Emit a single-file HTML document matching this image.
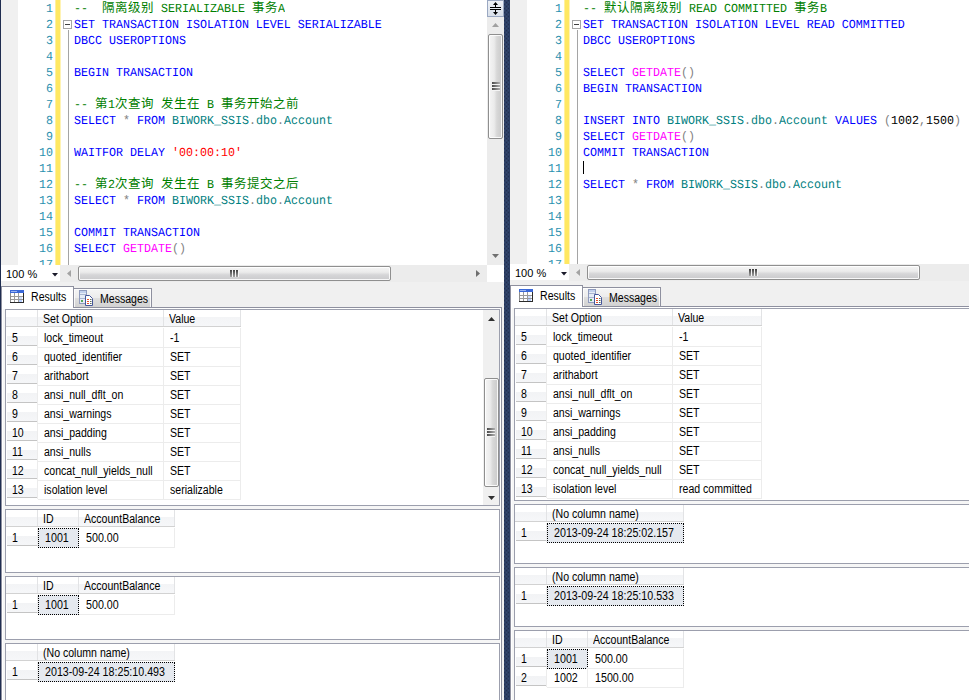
<!DOCTYPE html><html><head><meta charset="utf-8"><title>SSMS</title><style>
*{box-sizing:border-box;margin:0;padding:0}
html,body{width:969px;height:700px;overflow:hidden;background:#f0f0f0}
body{position:relative;font-family:"Liberation Sans","Noto Sans CJK SC",sans-serif;font-size:12px;color:#000}
div{position:absolute}
.dv{top:0;width:6px;height:700px;background:#2c3e63;overflow:hidden}
.ed{top:0;background:#fff;overflow:hidden}
.mg{left:0;top:0;width:17px;height:265px;background:#f0f0f0}
.yb{left:54px;top:0;width:6px;height:265px;background:linear-gradient(90deg,#fff0a0 0,#fff0a0 1px,#ffe862 1px,#ffe862 5px,#fff3b4 5px)}
.ol{left:67px;top:30px;width:1px;height:235px;background:#a5a5a5}
.ob{left:62px;top:20px;width:9px;height:9px;border:1px solid #a5a5a5;background:#fff}
.ob i{position:absolute;left:1px;top:3px;width:5px;height:1px;background:#404040}
.ln{left:17px;width:35px;height:16px;line-height:16px;text-align:right;font-family:"Liberation Mono",monospace;font-size:11.667px;color:#2b91af;white-space:pre;text-rendering:geometricPrecision;transform:scaleY(1.06);transform-origin:0 0}
.cl{height:16px;line-height:16px;font-family:"Liberation Mono",monospace;font-size:11.667px;white-space:pre;text-rendering:geometricPrecision;transform:scaleY(1.06);transform-origin:0 0}
.cz{height:16px;line-height:16px;font-family:"Liberation Sans","Noto Sans CJK SC",sans-serif;font-size:12.5px;letter-spacing:0.5px;white-space:pre}
.k{color:#0000ff}.c{color:#008000}.o{color:#008080}.s{color:#ff0000}.f{color:#ff00ff}.g{color:#808080}.n{color:#000}
.caret{left:73px;width:1px;height:13px;background:#000}
.t{height:16px;line-height:16px;font-size:12px;white-space:pre;transform:scaleX(0.88);transform-origin:0 0}
.zb{height:16px;background:#fff;width:59px}
.hs{height:17px;background:#ececec}
.th{border:1px solid #8f8f8f;border-radius:2px;box-shadow:inset 0 0 0 1px rgba(255,255,255,0.85)}
.thh{background:linear-gradient(#f5f5f5 0,#ebebeb 40%,#d6d6d8 60%,#cacacc 100%)}
.thv{background:linear-gradient(90deg,#f5f5f5 0,#ebebeb 40%,#d8d8d8 60%,#cacaca 100%)}
.tp{border:1px solid #8e909f;background:#f6f6f6;box-shadow:inset 0 0 0 1px #fff}
.tab{border:1px solid #8e909f;border-bottom:none;box-shadow:inset 1px 1px 0 rgba(255,255,255,0.8),inset -1px 0 0 rgba(255,255,255,0.8)}
.gp{background:#fff;border:1px solid #9c9fad;overflow:hidden}
.hr{left:0;top:0;height:17px;background:linear-gradient(#fff 0,#fff 7px,#f3f4f6 7px,#f6f7f9 16px,#d2d2d2 16px)}
.vs{top:0;width:1px;height:16px;background:#e2e3e5}
.rh{left:0;width:32px;height:19px;background:linear-gradient(#fff 0,#fff 8px,#f2f3f5 8px,#f5f6f8 17px,#c4c4c4 17px,#c4c4c4 18px,#fff 18px);border-left:1px solid #fff;border-right:1px solid #ececec}
.dc{height:20px;border-right:1px solid #ececec;border-bottom:1px solid #ececec}
.sel{height:20px;background:#e5e9ef;border:1px dotted #000}
svg{position:absolute}
</style></head><body>
<div class="ed" style="left:1px;width:486px;height:265px">
<div class="mg"></div><div class="yb"></div><div class="ol"></div><div class="ob"><i></i></div>
<div class="ln" style="top:0px">1</div>
<div class="cl c" style="left:73px;top:0px">--</div><div class="cz c" style="left:101px;top:0px">隔离级别</div><div class="cl c" style="left:160px;top:0px">SERIALIZABLE</div><div class="cz c" style="left:251px;top:0px">事务</div><div class="cl c" style="left:277px;top:0px">A</div>
<div class="ln" style="top:16px">2</div>
<div class="cl k" style="left:73px;top:16px">SET TRANSACTION ISOLATION LEVEL SERIALIZABLE</div>
<div class="ln" style="top:32px">3</div>
<div class="cl k" style="left:73px;top:32px">DBCC USEROPTIONS</div>
<div class="ln" style="top:48px">4</div>
<div class="ln" style="top:64px">5</div>
<div class="cl k" style="left:73px;top:64px">BEGIN TRANSACTION</div>
<div class="ln" style="top:80px">6</div>
<div class="ln" style="top:96px">7</div>
<div class="cl c" style="left:73px;top:96px">--</div><div class="cz c" style="left:94px;top:96px">第</div><div class="cl c" style="left:107px;top:96px">1</div><div class="cz c" style="left:114px;top:96px">次查询</div><div class="cz c" style="left:160px;top:96px">发生在</div><div class="cl c" style="left:206px;top:96px">B</div><div class="cz c" style="left:220px;top:96px">事务开始之前</div>
<div class="ln" style="top:112px">8</div>
<div class="cl k" style="left:73px;top:112px">SELECT</div><div class="cl g" style="left:122px;top:112px">*</div><div class="cl k" style="left:136px;top:112px">FROM</div><div class="cl o" style="left:171px;top:112px">BIWORK_SSIS</div><div class="cl g" style="left:248px;top:112px">.</div><div class="cl o" style="left:255px;top:112px">dbo</div><div class="cl g" style="left:276px;top:112px">.</div><div class="cl o" style="left:283px;top:112px">Account</div>
<div class="ln" style="top:128px">9</div>
<div class="ln" style="top:144px">10</div>
<div class="cl k" style="left:73px;top:144px">WAITFOR DELAY</div><div class="cl s" style="left:171px;top:144px">'00:00:10'</div>
<div class="ln" style="top:160px">11</div>
<div class="ln" style="top:176px">12</div>
<div class="cl c" style="left:73px;top:176px">--</div><div class="cz c" style="left:94px;top:176px">第</div><div class="cl c" style="left:107px;top:176px">2</div><div class="cz c" style="left:114px;top:176px">次查询</div><div class="cz c" style="left:160px;top:176px">发生在</div><div class="cl c" style="left:206px;top:176px">B</div><div class="cz c" style="left:220px;top:176px">事务提交之后</div>
<div class="ln" style="top:192px">13</div>
<div class="cl k" style="left:73px;top:192px">SELECT</div><div class="cl g" style="left:122px;top:192px">*</div><div class="cl k" style="left:136px;top:192px">FROM</div><div class="cl o" style="left:171px;top:192px">BIWORK_SSIS</div><div class="cl g" style="left:248px;top:192px">.</div><div class="cl o" style="left:255px;top:192px">dbo</div><div class="cl g" style="left:276px;top:192px">.</div><div class="cl o" style="left:283px;top:192px">Account</div>
<div class="ln" style="top:208px">14</div>
<div class="ln" style="top:224px">15</div>
<div class="cl k" style="left:73px;top:224px">COMMIT TRANSACTION</div>
<div class="ln" style="top:240px">16</div>
<div class="cl k" style="left:73px;top:240px">SELECT</div><div class="cl f" style="left:122px;top:240px">GETDATE</div><div class="cl g" style="left:171px;top:240px">()</div>
<div class="ln" style="top:256px">17</div>
</div>
<div class="zb" style="left:1px;top:265px"><div class="t" style="left:5px;top:1px;font-size:11px;transform:none">100 %</div><svg style="left:51px;top:8px" width="6" height="3.5"><path d="M0 0 L6 0 L3 3.5 Z" fill="#1a1a2a"/></svg></div>
<div class="hs" style="left:60px;top:265px;width:427px"><svg style="left:7px;top:5px" width="4" height="7"><path d="M4 0 L4 7 L0 3.5 Z" fill="#a3a3a3"/></svg><div class="th thh" style="left:18px;top:1px;width:313px;height:15px"></div><div style="left:170px;top:5px;width:3px;height:7px;border-right:1px solid #f4f4f4;background:linear-gradient(#3c3c3c,#a4a4a4)"></div><div style="left:173px;top:5px;width:3px;height:7px;border-right:1px solid #f4f4f4;background:linear-gradient(#3c3c3c,#a4a4a4)"></div><div style="left:176px;top:5px;width:3px;height:7px;border-right:1px solid #f4f4f4;background:linear-gradient(#3c3c3c,#a4a4a4)"></div><svg style="left:416px;top:5px" width="4" height="7"><path d="M0 0 L4 3.5 L0 7 Z" fill="#6e6e6e"/></svg></div>
<div class="ed" style="left:510px;width:460px;height:264px">
<div class="mg"></div><div class="yb"></div><div class="ol"></div><div class="ob"><i></i></div>
<div class="ln" style="top:0px">1</div>
<div class="cl c" style="left:73px;top:0px">--</div><div class="cz c" style="left:94px;top:0px">默认隔离级别</div><div class="cl c" style="left:179px;top:0px">READ COMMITTED</div><div class="cz c" style="left:284px;top:0px">事务</div><div class="cl c" style="left:310px;top:0px">B</div>
<div class="ln" style="top:16px">2</div>
<div class="cl k" style="left:73px;top:16px">SET TRANSACTION ISOLATION LEVEL READ COMMITTED</div>
<div class="ln" style="top:32px">3</div>
<div class="cl k" style="left:73px;top:32px">DBCC USEROPTIONS</div>
<div class="ln" style="top:48px">4</div>
<div class="ln" style="top:64px">5</div>
<div class="cl k" style="left:73px;top:64px">SELECT</div><div class="cl f" style="left:122px;top:64px">GETDATE</div><div class="cl g" style="left:171px;top:64px">()</div>
<div class="ln" style="top:80px">6</div>
<div class="cl k" style="left:73px;top:80px">BEGIN TRANSACTION</div>
<div class="ln" style="top:96px">7</div>
<div class="ln" style="top:112px">8</div>
<div class="cl k" style="left:73px;top:112px">INSERT INTO</div><div class="cl o" style="left:157px;top:112px">BIWORK_SSIS</div><div class="cl g" style="left:234px;top:112px">.</div><div class="cl o" style="left:241px;top:112px">dbo</div><div class="cl g" style="left:262px;top:112px">.</div><div class="cl o" style="left:269px;top:112px">Account</div><div class="cl k" style="left:325px;top:112px">VALUES</div><div class="cl g" style="left:374px;top:112px">(</div><div class="cl n" style="left:381px;top:112px">1002</div><div class="cl g" style="left:409px;top:112px">,</div><div class="cl n" style="left:416px;top:112px">1500</div><div class="cl g" style="left:444px;top:112px">)</div>
<div class="ln" style="top:128px">9</div>
<div class="cl k" style="left:73px;top:128px">SELECT</div><div class="cl f" style="left:122px;top:128px">GETDATE</div><div class="cl g" style="left:171px;top:128px">()</div>
<div class="ln" style="top:144px">10</div>
<div class="cl k" style="left:73px;top:144px">COMMIT TRANSACTION</div>
<div class="ln" style="top:160px">11</div>
<div class="ln" style="top:176px">12</div>
<div class="cl k" style="left:73px;top:176px">SELECT</div><div class="cl g" style="left:122px;top:176px">*</div><div class="cl k" style="left:136px;top:176px">FROM</div><div class="cl o" style="left:171px;top:176px">BIWORK_SSIS</div><div class="cl g" style="left:248px;top:176px">.</div><div class="cl o" style="left:255px;top:176px">dbo</div><div class="cl g" style="left:276px;top:176px">.</div><div class="cl o" style="left:283px;top:176px">Account</div>
<div class="ln" style="top:192px">13</div>
<div class="ln" style="top:208px">14</div>
<div class="ln" style="top:224px">15</div>
<div class="ln" style="top:240px">16</div>
<div class="ln" style="top:256px">17</div>
<div class="caret" style="top:161px"></div>
</div>
<div class="zb" style="left:510px;top:264px"><div class="t" style="left:5px;top:1px;font-size:11px;transform:none">100 %</div><svg style="left:51px;top:8px" width="6" height="3.5"><path d="M0 0 L6 0 L3 3.5 Z" fill="#1a1a2a"/></svg></div>
<div class="hs" style="left:569px;top:264px;width:400px"><svg style="left:7px;top:5px" width="4" height="7"><path d="M4 0 L4 7 L0 3.5 Z" fill="#a3a3a3"/></svg><div class="th thh" style="left:18px;top:1px;width:333px;height:15px"></div><div style="left:180px;top:5px;width:3px;height:7px;border-right:1px solid #f4f4f4;background:linear-gradient(#3c3c3c,#a4a4a4)"></div><div style="left:183px;top:5px;width:3px;height:7px;border-right:1px solid #f4f4f4;background:linear-gradient(#3c3c3c,#a4a4a4)"></div><div style="left:186px;top:5px;width:3px;height:7px;border-right:1px solid #f4f4f4;background:linear-gradient(#3c3c3c,#a4a4a4)"></div></div>
<div style="left:487px;top:0;width:17px;height:265px;background:#ececec"><div style="left:0;top:0;width:17px;height:17px;border:1px solid #9aa8c2;background:linear-gradient(#eef1f6,#d9e0ea)"></div><svg style="left:3px;top:2px" width="11" height="13" viewBox="0 0 11 13"><path d="M5.5 0L8 3H6V5H11V6H0V5H5V3H3zM0 7H11V8H6V10H8L5.5 13L3 10H5V8H0z" fill="#000"/></svg><svg style="left:5px;top:23px" width="7" height="4"><path d="M0 4 L3.5 0 L7 4 Z" fill="#a0a0a0"/></svg><div class="th thv" style="left:1px;top:34px;width:15px;height:105px"></div><div style="left:5px;top:82px;width:8px;height:3px;border-bottom:1px solid #f4f4f4;background:linear-gradient(90deg,#4a4a4a,#b0b0b0)"></div><div style="left:5px;top:85px;width:8px;height:3px;border-bottom:1px solid #f4f4f4;background:linear-gradient(90deg,#4a4a4a,#b0b0b0)"></div><div style="left:5px;top:88px;width:8px;height:3px;border-bottom:1px solid #f4f4f4;background:linear-gradient(90deg,#4a4a4a,#b0b0b0)"></div><svg style="left:5px;top:254px" width="7" height="4"><path d="M0 0 L7 0 L3.5 4 Z" fill="#707070"/></svg></div>
<div style="left:487px;top:265px;width:17px;height:17px;background:#fff"></div>
<div class="tp" style="left:1px;top:307px;width:501px;height:400px"></div><div class="tab" style="left:73px;top:288px;width:79px;height:19px;background:linear-gradient(#f5f5f5 0,#ececec 9px,#dfdfdf 9px,#d2d2d2 100%)"><div class="t" style="left:26px;top:2px">Messages</div><svg style="left:5px;top:1px" width="14" height="16" viewBox="0 0 14 16"><rect x="0.5" y="0.5" width="7" height="13" fill="#e6ecf6" stroke="#8f9bbd"/><rect x="1" y="1" width="6" height="2" fill="#c2d0ec"/><path d="M1 4.5h6M1 8.5h6" stroke="#a8b4d0"/><rect x="2" y="10" width="2" height="2" fill="#58a858"/><path d="M6.5 5.5h4l3 3v7h-7z" fill="#fff" stroke="#46569a"/><path d="M8 9.5h2M8 11.5h2M8 13.5h2" stroke="#e8502c"/><path d="M11 9.5h1.5M11 11.5h1.5M11 13.5h1.5" stroke="#5a6a5a"/></svg></div><div class="tab" style="left:1px;top:286px;width:73px;height:22px;background:#fff"><div class="t" style="left:29.3px;top:2px">Results</div><svg style="left:8px;top:3px" width="14" height="13" viewBox="0 0 14 13"><rect x="0" y="0" width="14" height="13" fill="#8d8d8d"/><rect x="1" y="3" width="12" height="9" fill="#fff"/><rect x="0" y="0" width="14" height="3" fill="#3a68d8"/><rect x="1" y="1" width="6" height="1" fill="#9ab4f0"/><path d="M1 6.5h12M1 9.5h12M4.5 3v9M8.5 3v9" stroke="#9a9a9a" fill="none"/><rect x="9" y="7" width="3" height="2" fill="#cfe0ff"/><rect x="9" y="10" width="3" height="2" fill="#b8d0ff"/><path d="M13.5 3v10M0 12.5h14" stroke="#2a2a2a" fill="none"/></svg></div>
<div class="tp" style="left:510px;top:306px;width:480px;height:400px"></div><div class="tab" style="left:582px;top:287px;width:79px;height:19px;background:linear-gradient(#f5f5f5 0,#ececec 9px,#dfdfdf 9px,#d2d2d2 100%)"><div class="t" style="left:26px;top:2px">Messages</div><svg style="left:5px;top:1px" width="14" height="16" viewBox="0 0 14 16"><rect x="0.5" y="0.5" width="7" height="13" fill="#e6ecf6" stroke="#8f9bbd"/><rect x="1" y="1" width="6" height="2" fill="#c2d0ec"/><path d="M1 4.5h6M1 8.5h6" stroke="#a8b4d0"/><rect x="2" y="10" width="2" height="2" fill="#58a858"/><path d="M6.5 5.5h4l3 3v7h-7z" fill="#fff" stroke="#46569a"/><path d="M8 9.5h2M8 11.5h2M8 13.5h2" stroke="#e8502c"/><path d="M11 9.5h1.5M11 11.5h1.5M11 13.5h1.5" stroke="#5a6a5a"/></svg></div><div class="tab" style="left:510px;top:285px;width:73px;height:22px;background:#fff"><div class="t" style="left:29.3px;top:2px">Results</div><svg style="left:8px;top:3px" width="14" height="13" viewBox="0 0 14 13"><rect x="0" y="0" width="14" height="13" fill="#8d8d8d"/><rect x="1" y="3" width="12" height="9" fill="#fff"/><rect x="0" y="0" width="14" height="3" fill="#3a68d8"/><rect x="1" y="1" width="6" height="1" fill="#9ab4f0"/><path d="M1 6.5h12M1 9.5h12M4.5 3v9M8.5 3v9" stroke="#9a9a9a" fill="none"/><rect x="9" y="7" width="3" height="2" fill="#cfe0ff"/><rect x="9" y="10" width="3" height="2" fill="#b8d0ff"/><path d="M13.5 3v10M0 12.5h14" stroke="#2a2a2a" fill="none"/></svg></div>
<div class="gp" style="left:5px;top:309px;width:495px;height:197px">
<div class="hr" style="width:235px"></div>
<div class="vs" style="left:31px"></div>
<div class="t" style="left:36.7px;top:1px">Set Option</div>
<div class="vs" style="left:157px"></div>
<div class="t" style="left:162.7px;top:1px">Value</div>
<div class="vs" style="left:234px"></div>
<div class="rh" style="top:18px"></div>
<div class="t" style="left:6.2px;top:20px">5</div>
<div class="dc" style="left:32px;top:18px;width:126px"></div>
<div class="t" style="left:38.2px;top:20px">lock_timeout</div>
<div class="dc" style="left:158px;top:18px;width:77px"></div>
<div class="t" style="left:164.2px;top:20px">-1</div>
<div class="rh" style="top:37px"></div>
<div class="t" style="left:6.2px;top:39px">6</div>
<div class="dc" style="left:32px;top:37px;width:126px"></div>
<div class="t" style="left:38.2px;top:39px">quoted_identifier</div>
<div class="dc" style="left:158px;top:37px;width:77px"></div>
<div class="t" style="left:164.2px;top:39px">SET</div>
<div class="rh" style="top:56px"></div>
<div class="t" style="left:6.2px;top:58px">7</div>
<div class="dc" style="left:32px;top:56px;width:126px"></div>
<div class="t" style="left:38.2px;top:58px">arithabort</div>
<div class="dc" style="left:158px;top:56px;width:77px"></div>
<div class="t" style="left:164.2px;top:58px">SET</div>
<div class="rh" style="top:75px"></div>
<div class="t" style="left:6.2px;top:77px">8</div>
<div class="dc" style="left:32px;top:75px;width:126px"></div>
<div class="t" style="left:38.2px;top:77px">ansi_null_dflt_on</div>
<div class="dc" style="left:158px;top:75px;width:77px"></div>
<div class="t" style="left:164.2px;top:77px">SET</div>
<div class="rh" style="top:94px"></div>
<div class="t" style="left:6.2px;top:96px">9</div>
<div class="dc" style="left:32px;top:94px;width:126px"></div>
<div class="t" style="left:38.2px;top:96px">ansi_warnings</div>
<div class="dc" style="left:158px;top:94px;width:77px"></div>
<div class="t" style="left:164.2px;top:96px">SET</div>
<div class="rh" style="top:113px"></div>
<div class="t" style="left:6.2px;top:115px">10</div>
<div class="dc" style="left:32px;top:113px;width:126px"></div>
<div class="t" style="left:38.2px;top:115px">ansi_padding</div>
<div class="dc" style="left:158px;top:113px;width:77px"></div>
<div class="t" style="left:164.2px;top:115px">SET</div>
<div class="rh" style="top:132px"></div>
<div class="t" style="left:6.2px;top:134px">11</div>
<div class="dc" style="left:32px;top:132px;width:126px"></div>
<div class="t" style="left:38.2px;top:134px">ansi_nulls</div>
<div class="dc" style="left:158px;top:132px;width:77px"></div>
<div class="t" style="left:164.2px;top:134px">SET</div>
<div class="rh" style="top:151px"></div>
<div class="t" style="left:6.2px;top:153px">12</div>
<div class="dc" style="left:32px;top:151px;width:126px"></div>
<div class="t" style="left:38.2px;top:153px">concat_null_yields_null</div>
<div class="dc" style="left:158px;top:151px;width:77px"></div>
<div class="t" style="left:164.2px;top:153px">SET</div>
<div class="rh" style="top:170px"></div>
<div class="t" style="left:6.2px;top:172px">13</div>
<div class="dc" style="left:32px;top:170px;width:126px"></div>
<div class="t" style="left:38.2px;top:172px">isolation level</div>
<div class="dc" style="left:158px;top:170px;width:77px"></div>
<div class="t" style="left:164.2px;top:172px">serializable</div>
<div style="left:477px;top:0;width:16px;height:195px;background:#f0f0f0"><svg style="left:5px;top:7px" width="7" height="4"><path d="M0 4 L3.5 0 L7 4 Z" fill="#303030"/></svg><div class="th thv" style="left:1px;top:68px;width:15px;height:109px"></div><div style="left:4px;top:118px;width:8px;height:3px;border-bottom:1px solid #f4f4f4;background:linear-gradient(90deg,#4a4a4a,#b0b0b0)"></div><div style="left:4px;top:121px;width:8px;height:3px;border-bottom:1px solid #f4f4f4;background:linear-gradient(90deg,#4a4a4a,#b0b0b0)"></div><div style="left:4px;top:124px;width:8px;height:3px;border-bottom:1px solid #f4f4f4;background:linear-gradient(90deg,#4a4a4a,#b0b0b0)"></div><svg style="left:5px;top:186px" width="7" height="4"><path d="M0 0 L7 0 L3.5 4 Z" fill="#303030"/></svg></div>
</div>
<div class="gp" style="left:5px;top:509px;width:495px;height:64px">
<div class="hr" style="width:169px"></div>
<div class="vs" style="left:31px"></div>
<div class="t" style="left:36.7px;top:1px">ID</div>
<div class="vs" style="left:72px"></div>
<div class="t" style="left:77.7px;top:1px">AccountBalance</div>
<div class="vs" style="left:168px"></div>
<div class="rh" style="top:18px"></div>
<div class="t" style="left:6.2px;top:20px">1</div>
<div class="sel" style="left:32px;top:18px;width:41px"></div>
<div class="t" style="left:39.3px;top:20px;transform:scaleX(0.89)">1001</div>
<div class="dc" style="left:73px;top:18px;width:96px"></div>
<div class="t" style="left:80.3px;top:20px;transform:scaleX(0.89)">500.00</div>

</div>
<div class="gp" style="left:5px;top:576px;width:495px;height:64px">
<div class="hr" style="width:169px"></div>
<div class="vs" style="left:31px"></div>
<div class="t" style="left:36.7px;top:1px">ID</div>
<div class="vs" style="left:72px"></div>
<div class="t" style="left:77.7px;top:1px">AccountBalance</div>
<div class="vs" style="left:168px"></div>
<div class="rh" style="top:18px"></div>
<div class="t" style="left:6.2px;top:20px">1</div>
<div class="sel" style="left:32px;top:18px;width:41px"></div>
<div class="t" style="left:39.3px;top:20px;transform:scaleX(0.89)">1001</div>
<div class="dc" style="left:73px;top:18px;width:96px"></div>
<div class="t" style="left:80.3px;top:20px;transform:scaleX(0.89)">500.00</div>

</div>
<div class="gp" style="left:5px;top:643px;width:495px;height:64px">
<div class="hr" style="width:169px"></div>
<div class="vs" style="left:31px"></div>
<div class="t" style="left:36.7px;top:1px">(No column name)</div>
<div class="vs" style="left:168px"></div>
<div class="rh" style="top:18px"></div>
<div class="t" style="left:6.2px;top:20px">1</div>
<div class="sel" style="left:32px;top:18px;width:137px"></div>
<div class="t" style="left:39.3px;top:20px;transform:scaleX(0.89)">2013-09-24 18:25:10.493</div>

</div>
<div class="gp" style="left:514px;top:308px;width:470px;height:193px">
<div class="hr" style="width:247px"></div>
<div class="vs" style="left:31px"></div>
<div class="t" style="left:36.7px;top:1px">Set Option</div>
<div class="vs" style="left:157px"></div>
<div class="t" style="left:162.7px;top:1px">Value</div>
<div class="vs" style="left:246px"></div>
<div class="rh" style="top:18px"></div>
<div class="t" style="left:6.2px;top:20px">5</div>
<div class="dc" style="left:32px;top:18px;width:126px"></div>
<div class="t" style="left:38.2px;top:20px">lock_timeout</div>
<div class="dc" style="left:158px;top:18px;width:89px"></div>
<div class="t" style="left:164.2px;top:20px">-1</div>
<div class="rh" style="top:37px"></div>
<div class="t" style="left:6.2px;top:39px">6</div>
<div class="dc" style="left:32px;top:37px;width:126px"></div>
<div class="t" style="left:38.2px;top:39px">quoted_identifier</div>
<div class="dc" style="left:158px;top:37px;width:89px"></div>
<div class="t" style="left:164.2px;top:39px">SET</div>
<div class="rh" style="top:56px"></div>
<div class="t" style="left:6.2px;top:58px">7</div>
<div class="dc" style="left:32px;top:56px;width:126px"></div>
<div class="t" style="left:38.2px;top:58px">arithabort</div>
<div class="dc" style="left:158px;top:56px;width:89px"></div>
<div class="t" style="left:164.2px;top:58px">SET</div>
<div class="rh" style="top:75px"></div>
<div class="t" style="left:6.2px;top:77px">8</div>
<div class="dc" style="left:32px;top:75px;width:126px"></div>
<div class="t" style="left:38.2px;top:77px">ansi_null_dflt_on</div>
<div class="dc" style="left:158px;top:75px;width:89px"></div>
<div class="t" style="left:164.2px;top:77px">SET</div>
<div class="rh" style="top:94px"></div>
<div class="t" style="left:6.2px;top:96px">9</div>
<div class="dc" style="left:32px;top:94px;width:126px"></div>
<div class="t" style="left:38.2px;top:96px">ansi_warnings</div>
<div class="dc" style="left:158px;top:94px;width:89px"></div>
<div class="t" style="left:164.2px;top:96px">SET</div>
<div class="rh" style="top:113px"></div>
<div class="t" style="left:6.2px;top:115px">10</div>
<div class="dc" style="left:32px;top:113px;width:126px"></div>
<div class="t" style="left:38.2px;top:115px">ansi_padding</div>
<div class="dc" style="left:158px;top:113px;width:89px"></div>
<div class="t" style="left:164.2px;top:115px">SET</div>
<div class="rh" style="top:132px"></div>
<div class="t" style="left:6.2px;top:134px">11</div>
<div class="dc" style="left:32px;top:132px;width:126px"></div>
<div class="t" style="left:38.2px;top:134px">ansi_nulls</div>
<div class="dc" style="left:158px;top:132px;width:89px"></div>
<div class="t" style="left:164.2px;top:134px">SET</div>
<div class="rh" style="top:151px"></div>
<div class="t" style="left:6.2px;top:153px">12</div>
<div class="dc" style="left:32px;top:151px;width:126px"></div>
<div class="t" style="left:38.2px;top:153px">concat_null_yields_null</div>
<div class="dc" style="left:158px;top:151px;width:89px"></div>
<div class="t" style="left:164.2px;top:153px">SET</div>
<div class="rh" style="top:170px"></div>
<div class="t" style="left:6.2px;top:172px">13</div>
<div class="dc" style="left:32px;top:170px;width:126px"></div>
<div class="t" style="left:38.2px;top:172px">isolation level</div>
<div class="dc" style="left:158px;top:170px;width:89px"></div>
<div class="t" style="left:164.2px;top:172px">read committed</div>

</div>
<div class="gp" style="left:514px;top:504px;width:470px;height:60px">
<div class="hr" style="width:169px"></div>
<div class="vs" style="left:31px"></div>
<div class="t" style="left:36.7px;top:1px">(No column name)</div>
<div class="vs" style="left:168px"></div>
<div class="rh" style="top:18px"></div>
<div class="t" style="left:6.2px;top:20px">1</div>
<div class="sel" style="left:32px;top:18px;width:137px"></div>
<div class="t" style="left:39.3px;top:20px;transform:scaleX(0.89)">2013-09-24 18:25:02.157</div>

</div>
<div class="gp" style="left:514px;top:567px;width:470px;height:60px">
<div class="hr" style="width:169px"></div>
<div class="vs" style="left:31px"></div>
<div class="t" style="left:36.7px;top:1px">(No column name)</div>
<div class="vs" style="left:168px"></div>
<div class="rh" style="top:18px"></div>
<div class="t" style="left:6.2px;top:20px">1</div>
<div class="sel" style="left:32px;top:18px;width:137px"></div>
<div class="t" style="left:39.3px;top:20px;transform:scaleX(0.89)">2013-09-24 18:25:10.533</div>

</div>
<div class="gp" style="left:514px;top:630px;width:470px;height:80px">
<div class="hr" style="width:169px"></div>
<div class="vs" style="left:31px"></div>
<div class="t" style="left:36.7px;top:1px">ID</div>
<div class="vs" style="left:72px"></div>
<div class="t" style="left:77.7px;top:1px">AccountBalance</div>
<div class="vs" style="left:168px"></div>
<div class="rh" style="top:18px"></div>
<div class="t" style="left:6.2px;top:20px">1</div>
<div class="sel" style="left:32px;top:18px;width:41px"></div>
<div class="t" style="left:39.3px;top:20px;transform:scaleX(0.89)">1001</div>
<div class="dc" style="left:73px;top:18px;width:96px"></div>
<div class="t" style="left:80.3px;top:20px;transform:scaleX(0.89)">500.00</div>
<div class="rh" style="top:37px"></div>
<div class="t" style="left:6.2px;top:39px">2</div>
<div class="dc" style="left:32px;top:37px;width:41px"></div>
<div class="t" style="left:39.3px;top:39px;transform:scaleX(0.89)">1002</div>
<div class="dc" style="left:73px;top:37px;width:96px"></div>
<div class="t" style="left:80.3px;top:39px;transform:scaleX(0.89)">1500.00</div>

</div>
<div class="dv" style="left:-5px;background:#1f2d50"></div><div class="dv" style="left:504px"><svg width="6" height="700" style="left:0;top:0"><defs><pattern id="dp2" width="4" height="4" patternUnits="userSpaceOnUse"><rect width="4" height="4" fill="#2c3e63"/><rect x="0" y="0" width="1" height="1" fill="#223050"/><rect x="2" y="2" width="1" height="1" fill="#223050"/><rect x="2" y="0" width="1" height="1" fill="#344870"/><rect x="0" y="2" width="1" height="1" fill="#344870"/></pattern></defs><rect width="6" height="700" fill="url(#dp2)"/></svg></div>
</body></html>
